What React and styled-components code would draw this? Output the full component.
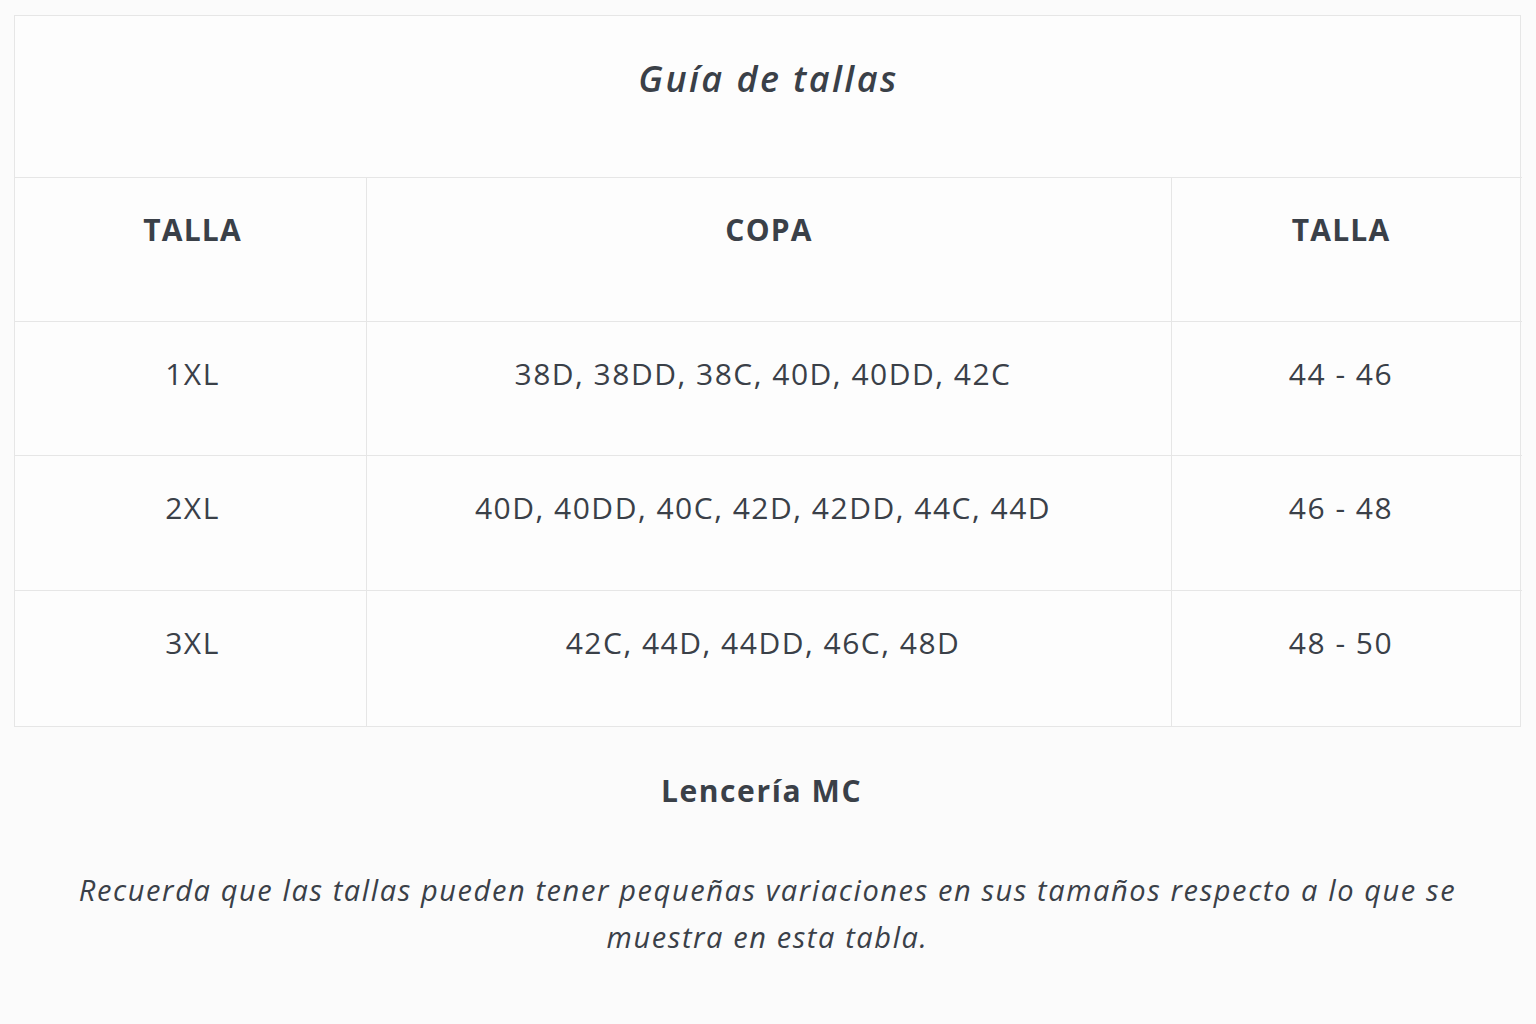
import styled, { createGlobalStyle } from "styled-components";

const GlobalStyle = createGlobalStyle`
  html, body {
    margin: 0;
    padding: 0;
    background: #fbfbfb;
  }
  body {
    font-family: "Open Sans", "Liberation Sans", sans-serif;
    color: #3a4048;
  }
`;

const Page = styled.div`
  width: 1536px;
  height: 1024px;
  padding: 15px 15px 0 14px;
  box-sizing: border-box;
`;

const Table = styled.div`
  display: grid;
  grid-template-columns: 352px 805px 350px;
  border: 1px solid #e6e6e6;
  background: #fdfdfd;
`;

const TitleCell = styled.div`
  grid-column: 1 / -1;
  height: 162px;
  box-sizing: border-box;
  padding-top: 38px;
  text-align: center;
  font-size: 36px;
  font-weight: 600;
  font-style: italic;
  letter-spacing: 2.4px;
  border-bottom: 1px solid #e6e6e6;
`;

// col: 0 left, 1 middle, 2 right — small offsets to centre the text like the source
const Cell = styled.div`
  height: ${(p) => p.h}px;
  box-sizing: border-box;
  padding-top: 31px;
  padding-left: ${(p) => (p.col === 0 ? 4 : 0)}px;
  padding-right: ${(p) => (p.col === 0 ? 0 : p.head && p.col === 1 ? 0 : 12)}px;
  text-align: center;
  font-size: 30px;
  font-weight: ${(p) => (p.head ? 700 : 400)};
  letter-spacing: ${(p) => (p.head ? 1.2 : 1.5)}px;
  border-right: ${(p) => (p.col === 2 ? "none" : "1px solid #e6e6e6")};
  border-bottom: ${(p) => (p.bottom ? "none" : "1px solid #e6e6e6")};
`;

const Brand = styled.div`
  margin-top: 43px;
  text-align: center;
  font-size: 30px;
  font-weight: 700;
  letter-spacing: 1.6px;
  padding-right: 12px;
`;

const Note = styled.p`
  margin: 55px auto 0;
  width: 1400px;
  text-align: center;
  font-size: 29px;
  font-style: italic;
  letter-spacing: 1.6px;
  line-height: 47px;
`;

const rows = [
  ["1XL", "38D, 38DD, 38C, 40D, 40DD, 42C", "44 - 46"],
  ["2XL", "40D, 40DD, 40C, 42D, 42DD, 44C, 44D", "46 - 48"],
  ["3XL", "42C, 44D, 44DD, 46C, 48D", "48 - 50"],
];
const heights = [134, 135, 135];

export default function App() {
  return (
    <Page>
      <GlobalStyle />
      <Table>
        <TitleCell>Guía de tallas</TitleCell>
        {["TALLA", "COPA", "TALLA"].map((h, j) => (
          <Cell key={"h" + j} head col={j} h={144}>
            {h}
          </Cell>
        ))}
        {rows.map((r, i) =>
          r.map((v, j) => (
            <Cell
              key={i + "-" + j}
              col={j}
              h={heights[i]}
              bottom={i === rows.length - 1}
            >
              {v}
            </Cell>
          ))
        )}
      </Table>
      <Brand>Lencería MC</Brand>
      <Note>
        Recuerda que las tallas pueden tener pequeñas variaciones en sus
        tamaños respecto a lo que se muestra en esta tabla.
      </Note>
    </Page>
  );
}
